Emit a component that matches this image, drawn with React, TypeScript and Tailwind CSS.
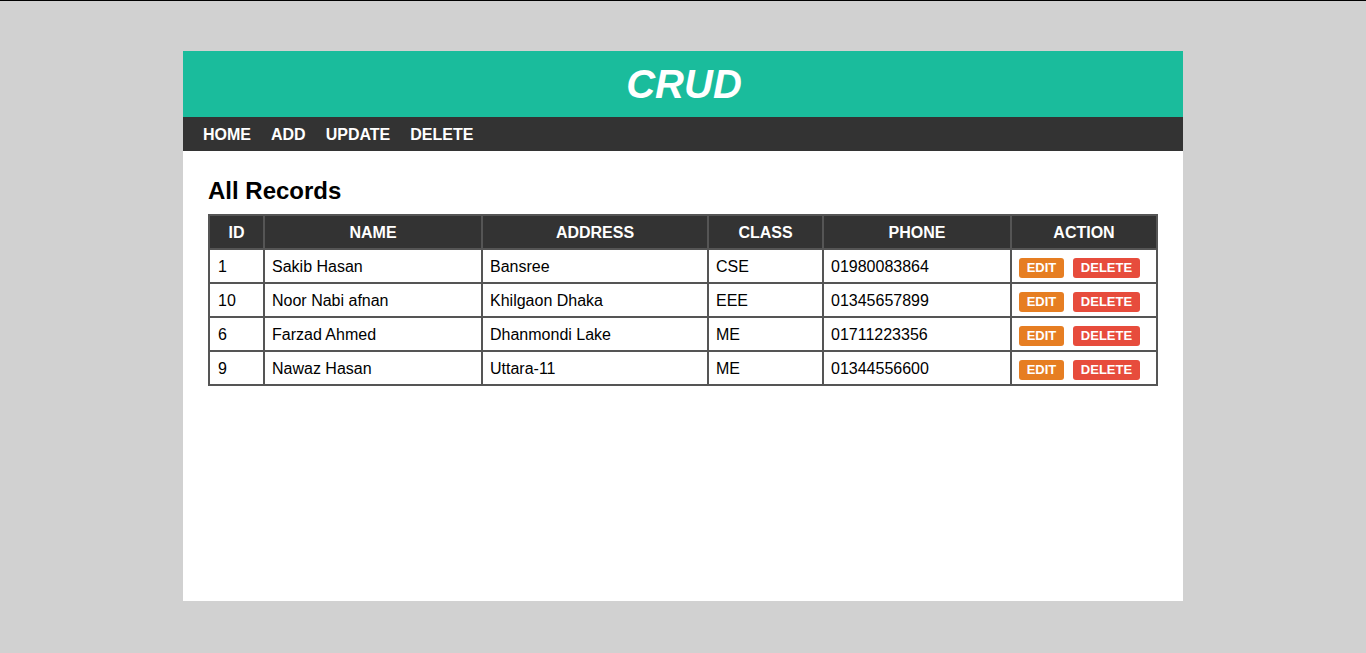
const rows = [
  { id: "1", name: "Sakib Hasan", address: "Bansree", cls: "CSE", phone: "01980083864" },
  { id: "10", name: "Noor Nabi afnan", address: "Khilgaon Dhaka", cls: "EEE", phone: "01345657899" },
  { id: "6", name: "Farzad Ahmed", address: "Dhanmondi Lake", cls: "ME", phone: "01711223356" },
  { id: "9", name: "Nawaz Hasan", address: "Uttara-11", cls: "ME", phone: "01344556600" },
];

export default function App() {
  return (
    <div
      className="min-h-[653px] bg-[#d1d1d1] border-t border-black pt-[50px]"
      style={{ fontFamily: '"Liberation Sans", Arial, sans-serif' }}
    >
      <div className="mx-auto w-[1000px] bg-white h-[550px]">
        {/* header */}
        <div className="bg-[#1abc9c] h-[66px] flex items-center justify-center">
          <h1 className="text-white text-[40px] font-bold italic leading-none pl-[2px]">CRUD</h1>
        </div>

        {/* nav */}
        <nav className="bg-[#333333] h-[34px] flex items-center px-[10px] pt-[2px]">
          {["HOME", "ADD", "UPDATE", "DELETE"].map((item) => (
            <a key={item} href="#" className="text-white font-bold text-[16px] px-[10px]">
              {item}
            </a>
          ))}
        </nav>

        {/* content */}
        <div className="px-[25px] pt-[26px]">
          <h2 className="text-[24px] font-bold leading-[28px] mb-[9px] text-black">All Records</h2>
          <table className="w-[950px] border-collapse border-2 border-[#555] text-[16px]">
            <thead>
              <tr className="bg-[#333333] text-white">
                <th className="border-2 border-[#555] h-[34px] pt-[2px] w-[55px] font-bold">ID</th>
                <th className="border-2 border-[#555] pt-[2px] w-[218px] font-bold">NAME</th>
                <th className="border-2 border-[#555] pt-[2px] w-[226px] font-bold">ADDRESS</th>
                <th className="border-2 border-[#555] pt-[2px] w-[115px] font-bold">CLASS</th>
                <th className="border-2 border-[#555] pt-[2px] w-[188px] font-bold">PHONE</th>
                <th className="border-2 border-[#555] pt-[2px] font-bold">ACTION</th>
              </tr>
            </thead>
            <tbody>
              {rows.map((r) => (
                <tr key={r.id} className="text-black">
                  <td className="border-2 border-[#555] h-[34px] pt-[2px] px-[8px]">{r.id}</td>
                  <td className="border-2 border-[#555] pt-[2px] px-[7px]">{r.name}</td>
                  <td className="border-2 border-[#555] pt-[2px] px-[7px]">{r.address}</td>
                  <td className="border-2 border-[#555] pt-[2px] px-[7px]">{r.cls}</td>
                  <td className="border-2 border-[#555] pt-[2px] px-[7px]">{r.phone}</td>
                  <td className="border-2 border-[#555] pt-[3px] px-[7px]">
                    <div className="flex items-center gap-[9px]">
                      <a href="#" className="bg-[#e67e22] text-white text-[13px] font-bold rounded-[3px] h-[20px] w-[45px] flex items-center justify-center">
                        EDIT
                      </a>
                      <a href="#" className="bg-[#e74c3c] text-white text-[13px] font-bold rounded-[3px] h-[20px] w-[67px] flex items-center justify-center">
                        DELETE
                      </a>
                    </div>
                  </td>
                </tr>
              ))}
            </tbody>
          </table>
        </div>
      </div>
    </div>
  );
}
